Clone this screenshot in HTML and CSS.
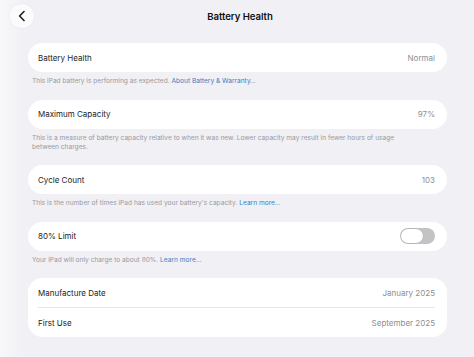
FILE: index.html
```html
<!DOCTYPE html>
<html lang="en">
<head>
<meta charset="utf-8">
<title>Battery Health</title>
<link rel="stylesheet" href="styles.css">
</head>
<body>
<div class="page">
  <header class="topbar">
    <button class="back" aria-label="Back">
      <svg width="24" height="24" viewBox="0 0 24 24"><path d="M14 7.5 L9.6 12 L14 16.5" fill="none" stroke="#1c1c1e" stroke-width="1.6" stroke-linecap="round" stroke-linejoin="round"/></svg>
    </button>
    <h1 class="title">Battery Health</h1>
    <span class="spacer"></span>
  </header>

  <main class="list">
    <section class="group">
      <div class="card">
        <div class="row"><span class="label">Battery Health</span><span class="value">Normal</span></div>
      </div>
      <p class="footer">This iPad battery is performing as expected. <a class="link">About Battery &amp; Warranty…</a></p>
    </section>

    <section class="group">
      <div class="card">
        <div class="row"><span class="label">Maximum Capacity</span><span class="value">97%</span></div>
      </div>
      <p class="footer">This is a measure of battery capacity relative to when it was new. Lower capacity may result in fewer hours of usage between charges.</p>
    </section>

    <section class="group">
      <div class="card">
        <div class="row"><span class="label">Cycle Count</span><span class="value">103</span></div>
      </div>
      <p class="footer">This is the number of times iPad has used your battery's capacity. <a class="link">Learn more…</a></p>
    </section>

    <section class="group">
      <div class="card">
        <div class="row"><span class="label">80% Limit</span><span class="toggle"><span class="knob"></span></span></div>
      </div>
      <p class="footer">Your iPad will only charge to about 80%. <a class="link">Learn more…</a></p>
    </section>

    <section class="group">
      <div class="card">
        <div class="row"><span class="label">Manufacture Date</span><span class="value">January 2025</span></div>
        <div class="divider"></div>
        <div class="row"><span class="label">First Use</span><span class="value">September 2025</span></div>
      </div>
    </section>
  </main>
</div>
</body>
</html>
```

FILE: styles.css
```css
* { box-sizing: border-box; }

html, body {
  margin: 0;
  padding: 0;
}

body {
  width: 474px;
  height: 357px;
  overflow: hidden;
  background: linear-gradient(to right, #f8f8fa 0px, #f0f0f5 26px);
  font-family: Inter, "Liberation Sans", sans-serif;
  color: #1c1c1e;
}

.page {
  padding: 4px 27px 0 28px;
}

.topbar {
  display: grid;
  grid-template-columns: 1fr auto 1fr;
  align-items: center;
  height: 24px;
  margin-left: -18px;
  margin-right: -27px;
}

.back {
  width: 24px;
  height: 24px;
  border-radius: 50%;
  border: none;
  padding: 0;
  background: #fbfbfc;
  box-shadow: 0 0 3px rgba(0,0,0,0.04);
  display: flex;
  align-items: center;
  justify-content: center;
}

.title {
  margin: 0;
  font-size: 9.6px;
  font-weight: 600;
  letter-spacing: -0.05px;
  color: #111;
  position: relative;
  left: -2px;
}

.list {
  margin-top: 15px;
}

.group {
  margin-bottom: 13.5px;
}

.card {
  background: #ffffff;
  border-radius: 14.5px;
  padding: 0 12px 0 10px;
}

.row {
  height: 29px;
  display: flex;
  align-items: center;
  justify-content: space-between;
  font-size: 8px;
}

.label {
  color: #1c1c1e;
}

.value {
  color: #8e8e93;
}

.divider {
  height: 1px;
  background: #e6e6ea;
}

.footer {
  margin: 5px 0 0 4px;
  font-size: 6.6px;
  line-height: 9px;
  color: #9a9aa0;
  padding-right: 37px;
}

.link {
  color: #3c7fbf;
}

.toggle {
  width: 35px;
  height: 16px;
  border-radius: 8px;
  background: #c3c3c6;
  display: flex;
  align-items: center;
  padding: 0 1px;
}

.knob {
  width: 22px;
  height: 14px;
  border-radius: 7px;
  background: #fff;
  box-shadow: 0 0 0 0.5px rgba(0,0,0,0.12);
}
```
